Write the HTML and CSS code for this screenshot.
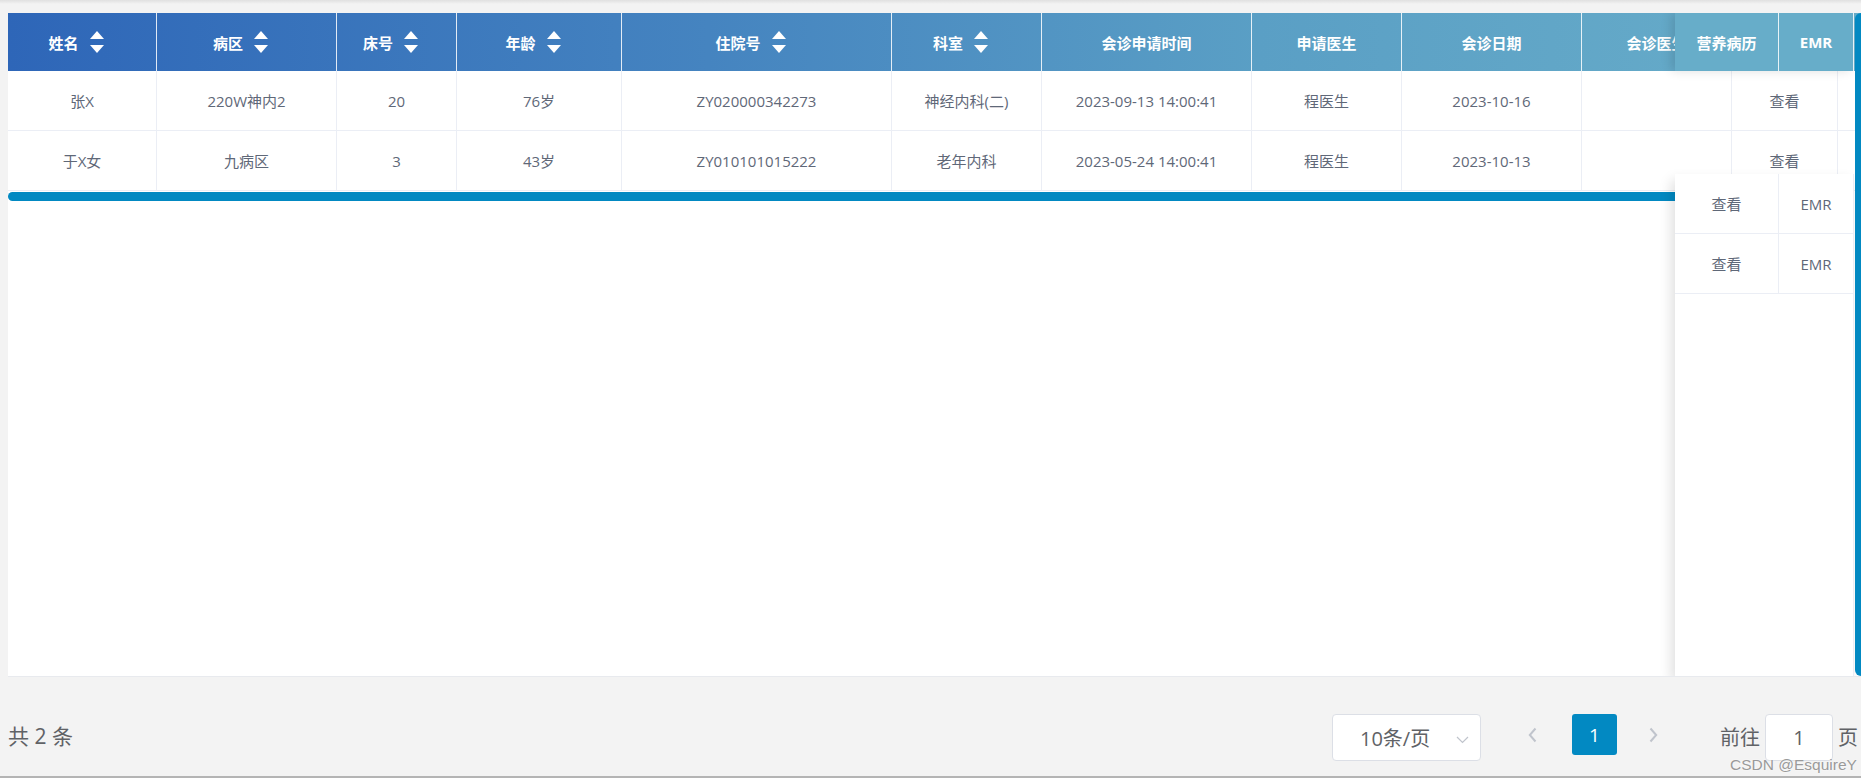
FILE: index.html
```html
<!DOCTYPE html>
<html lang="zh">
<head>
<meta charset="utf-8">
<title>会诊列表</title>
<link rel="stylesheet" href="styles.css">
</head>
<body>
<div class="topshade"></div>
<div class="table-wrap">
  <div class="main">
    <div class="row head">
      <div class="th sortable"><span>姓名</span><i class="caret"></i></div>
      <div class="th sortable"><span>病区</span><i class="caret"></i></div>
      <div class="th sortable"><span>床号</span><i class="caret"></i></div>
      <div class="th sortable"><span>年龄</span><i class="caret"></i></div>
      <div class="th sortable"><span>住院号</span><i class="caret"></i></div>
      <div class="th sortable"><span>科室</span><i class="caret"></i></div>
      <div class="th">会诊申请时间</div>
      <div class="th">申请医生</div>
      <div class="th">会诊日期</div>
      <div class="th">会诊医生</div>
      <div class="th"></div>
      <div class="th"></div>
    </div>
    <div class="row">
      <div class="td">张X</div>
      <div class="td">220W神内2</div>
      <div class="td">20</div>
      <div class="td">76岁</div>
      <div class="td">ZY020000342273</div>
      <div class="td">神经内科(二)</div>
      <div class="td">2023-09-13 14:00:41</div>
      <div class="td">程医生</div>
      <div class="td">2023-10-16</div>
      <div class="td"></div>
      <div class="td">查看</div>
      <div class="td"></div>
    </div>
    <div class="row">
      <div class="td">于X女</div>
      <div class="td">九病区</div>
      <div class="td">3</div>
      <div class="td">43岁</div>
      <div class="td">ZY010101015222</div>
      <div class="td">老年内科</div>
      <div class="td">2023-05-24 14:00:41</div>
      <div class="td">程医生</div>
      <div class="td">2023-10-13</div>
      <div class="td"></div>
      <div class="td">查看</div>
      <div class="td"></div>
    </div>
    <div class="hscroll"></div>
  </div>

  <div class="fixed-head">
    <div class="fth">营养病历</div>
    <div class="fth">EMR</div>
  </div>
  <div class="fixed-body">
    <div class="frow">
      <div class="ftd">查看</div>
      <div class="ftd">EMR</div>
    </div>
    <div class="frow">
      <div class="ftd">查看</div>
      <div class="ftd">EMR</div>
    </div>
  </div>
  <div class="vscroll"></div>
</div>

<div class="pager">
  <div class="total">共 2 条</div>
  <div class="select">
    <span>10条/页</span>
    <svg class="chev" width="13" height="8" viewBox="0 0 13 8"><path d="M1 1 L6.5 6.5 L12 1" fill="none" stroke="#c0c4cc" stroke-width="1.2"/></svg>
  </div>
  <div class="btn prev"><svg width="9" height="16" viewBox="0 0 9 16"><path d="M7.5 1.5 L1.8 8 L7.5 14.5" fill="none" stroke="#c0c4cc" stroke-width="2"/></svg></div>
  <div class="btn page">1</div>
  <div class="btn next"><svg width="9" height="16" viewBox="0 0 9 16"><path d="M1.5 1.5 L7.2 8 L1.5 14.5" fill="none" stroke="#c0c4cc" stroke-width="2"/></svg></div>
  <div class="jump">前往</div>
  <div class="input">1</div>
  <div class="unit">页</div>
</div>
<div class="watermark">CSDN @EsquireY</div>
<div class="bottom-line"></div>
</body>
</html>
```

FILE: styles.css
```css
* {
  box-sizing: border-box;
  margin: 0;
  padding: 0;
}

body {
  width: 1861px;
  height: 778px;
  background: #f3f3f3;
  font-family: "Open Sans", "Noto Sans CJK SC", sans-serif;
  overflow: hidden;
  display: flex;
  flex-direction: column;
  position: relative;
}

.topshade {
  height: 13px;
  flex: none;
  background: linear-gradient(#e0e0e0 0, #f3f3f3 4px);
}

.table-wrap {
  position: relative;
  flex: none;
  margin-left: 8px;
  width: 1853px;
  height: 664px;
  background: #fff;
  border-bottom: 1px solid #e8eaee;
  overflow: hidden;
}

.main {
  width: 1930px;
}

.row {
  display: grid;
  grid-template-columns: 149px 180px 120px 165px 270px 150px 210px 150px 180px 150px 106px 100px;
}

.head {
  height: 58px;
  background: linear-gradient(90deg, #2e66b8 0, #4584c0 700px, #5a9fc5 1250px, #64a9c8 1670px, #67aec9 100%);
}

.th {
  display: flex;
  align-items: center;
  justify-content: center;
  color: #fff;
  font-weight: bold;
  font-size: 15px;
  border-right: 1px solid rgba(255, 255, 255, 0.85);
  white-space: nowrap;
  overflow: hidden;
}

.th.sortable {
  padding-right: 12px;
}

.caret {
  display: flex;
  flex-direction: column;
  gap: 6px;
  margin-left: 11px;
}

.caret::before,
.caret::after {
  content: "";
  width: 0;
  height: 0;
  border-left: 7px solid transparent;
  border-right: 7px solid transparent;
}

.caret::before {
  border-bottom: 8px solid #fff;
}

.caret::after {
  border-top: 8px solid #fff;
}

.td {
  height: 60px;
  display: flex;
  align-items: center;
  justify-content: center;
  border-right: 1px solid #ebeef5;
  border-bottom: 1px solid #ebeef5;
  font-size: 15px;
  color: #5f6878;
  white-space: nowrap;
}

.hscroll {
  margin-top: 1px;
  height: 9px;
  width: 1720px;
  background: #0289c2;
  border-radius: 5px;
}

.fixed-head {
  position: absolute;
  left: 1667px;
  top: 0;
  width: 179px;
  height: 58px;
  display: flex;
  background: #67adc9;
  box-shadow: -4px 0 10px rgba(0, 0, 0, 0.12);
  border-right: 1px solid rgba(255, 255, 255, 0.85);
}

.fth {
  display: flex;
  align-items: center;
  justify-content: center;
  color: #fff;
  font-weight: bold;
  font-size: 15px;
}

.fth:first-child {
  width: 104px;
  border-right: 1px solid rgba(255, 255, 255, 0.85);
}

.fth:last-child {
  flex: 1;
}

.fixed-body {
  position: absolute;
  left: 1667px;
  top: 161px;
  bottom: 0;
  width: 179px;
  background: #fff;
  box-shadow: -4px 6px 12px rgba(0, 0, 0, 0.12);
  border-right: 1px solid #ebeef5;
}

.frow {
  display: flex;
  height: 60px;
  border-bottom: 1px solid #ebeef5;
}

.ftd {
  display: flex;
  align-items: center;
  justify-content: center;
  font-size: 15px;
  color: #5f6878;
}

.ftd:first-child {
  width: 104px;
  border-right: 1px solid #ebeef5;
}

.ftd:last-child {
  flex: 1;
}

.vscroll {
  position: absolute;
  left: 1847px;
  top: 0;
  width: 14px;
  height: 663px;
  background: #0289c2;
  border-radius: 6px;
}

.pager {
  flex: none;
  display: flex;
  align-items: flex-start;
  height: 47px;
  margin-top: 37px;
  padding-left: 8px;
  color: #606266;
  font-size: 20px;
}

.pager > * {
  flex: none;
}

.total {
  width: 1324px;
  line-height: 45px;
  font-size: 21px;
}

.select {
  position: relative;
  width: 149px;
  height: 47px;
  border: 1px solid #dcdfe6;
  border-radius: 4px;
  background: #fff;
  display: flex;
  align-items: center;
  padding-left: 27px;
}

.chev {
  position: absolute;
  right: 11px;
  top: 21px;
}

.btn {
  width: 45px;
  height: 41px;
  display: flex;
  align-items: center;
  justify-content: center;
}

.prev {
  margin-left: 29px;
}

.page {
  margin-left: 17px;
  background: #0289c2;
  color: #fff;
  border-radius: 3px;
  font-size: 19px;
}

.next {
  margin-left: 14px;
}

.jump {
  margin-left: 44px;
  line-height: 47px;
}

.input {
  margin-left: 5px;
  width: 68px;
  height: 47px;
  border: 1px solid #dcdfe6;
  border-radius: 4px;
  background: #fff;
  display: flex;
  align-items: center;
  justify-content: center;
}

.unit {
  margin-left: 5px;
  line-height: 47px;
}

.watermark {
  position: absolute;
  left: 1730px;
  top: 756px;
  font-family: "Liberation Sans", Arial, sans-serif;
  font-size: 15.5px;
  color: #9a9a9a;
  text-shadow: 0 0 2px #fff;
}

.bottom-line {
  margin-top: auto;
  height: 2px;
  flex: none;
  background: #b4b4b4;
}
```
